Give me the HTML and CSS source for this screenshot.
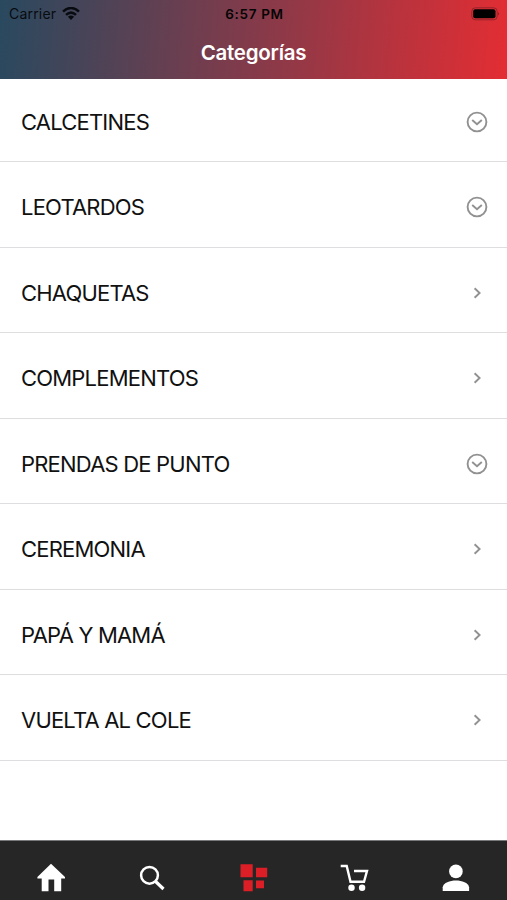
FILE: index.html
```html
<!DOCTYPE html>
<html lang="es">
<head>
<meta charset="utf-8">
<title>Categorías</title>
<link rel="stylesheet" href="styles.css">
</head>
<body>
<header class="header">
  <div class="status">
    <div class="carrier"><span>Carrier</span>
      <svg width="18" height="14" viewBox="0 0 18 14"><g fill="none" stroke="#080b10" stroke-width="2.5"><path d="M1 4.7Q9-2.7 17 4.7"/><path d="M4 7.9Q9 3.3 14 7.9"/></g><path d="M5.9 9.8Q9 7.1 12.1 9.8L9 13z" fill="#080b10"/></svg>
    </div>
    <span class="time">6:57 PM</span>
    <svg class="battery" width="30" height="14" viewBox="0 0 30 14"><rect x="1.8" y=".8" width="25.4" height="12" rx="3.5" fill="none" stroke="#942329"/><rect x="3.2" y="2.3" width="22.3" height="9" rx="2" fill="#000"/><path d="M28.3 5Q30 6.8 28.3 8.6z" fill="#64171b"/></svg>
  </div>
  <h1 class="title">Categorías</h1>
</header>
<main class="list">
  <div class="row"><span class="label">CALCETINES</span><svg class="icon" viewBox="0 0 22 22"><circle cx="11" cy="11" r="9.4"/><path d="M6.2 9L11 13.2L15.8 9"/></svg></div>
  <div class="row"><span class="label">LEOTARDOS</span><svg class="icon" viewBox="0 0 22 22"><circle cx="11" cy="11" r="9.4"/><path d="M6.2 9L11 13.2L15.8 9"/></svg></div>
  <div class="row"><span class="label">CHAQUETAS</span><svg class="icon" viewBox="0 0 22 22"><path d="M8.6 6.2L13.6 11L8.6 15.8"/></svg></div>
  <div class="row"><span class="label">COMPLEMENTOS</span><svg class="icon" viewBox="0 0 22 22"><path d="M8.6 6.2L13.6 11L8.6 15.8"/></svg></div>
  <div class="row"><span class="label">PRENDAS DE PUNTO</span><svg class="icon" viewBox="0 0 22 22"><circle cx="11" cy="11" r="9.4"/><path d="M6.2 9L11 13.2L15.8 9"/></svg></div>
  <div class="row"><span class="label">CEREMONIA</span><svg class="icon" viewBox="0 0 22 22"><path d="M8.6 6.2L13.6 11L8.6 15.8"/></svg></div>
  <div class="row"><span class="label">PAPÁ Y MAMÁ</span><svg class="icon" viewBox="0 0 22 22"><path d="M8.6 6.2L13.6 11L8.6 15.8"/></svg></div>
  <div class="row"><span class="label">VUELTA AL COLE</span><svg class="icon" viewBox="0 0 22 22"><path d="M8.6 6.2L13.6 11L8.6 15.8"/></svg></div>
</main>
<nav class="tabs">
  <svg viewBox="0 0 30 30"><path fill="#fff" d="M15.3 .8L29.3 14V15.5H25.5V28.2H18.5V16.5H12.8V28.2H6V15.5H1.7V14z"/></svg>
  <svg viewBox="0 0 30 30" fill="none" stroke="#fff"><circle cx="12.8" cy="12.3" r="8.4" stroke-width="2.5"/><path d="M18.9 18.5L26.8 26" stroke-width="3.2"/></svg>
  <svg viewBox="0 0 30 30" fill="#dc1f26"><path d="M1.8 1.3H14V14.3H1.8zM17.3 4.8H28.5V14.3H17.3zM4.8 17.3H14V28.3H4.8zM17.3 17.5H25.3V25.3H17.3z"/></svg>
  <svg viewBox="0 0 30 30"><path fill="none" stroke="#fff" stroke-width="2.4" d="M1 3H7L10.8 18.8H24.3L27.3 8H14.3"/><circle cx="11.8" cy="24.8" r="3.2" fill="#fff"/><circle cx="22.4" cy="24.8" r="3.2" fill="#fff"/></svg>
  <svg viewBox="0 0 30 30" fill="#fff"><circle cx="14.2" cy="8.4" r="6.8"/><path d="M1 28V24.2C2.7 15.4 25.7 15.4 27.4 24.2V28z"/></svg>
</nav>
</body>
</html>
```
FILE: styles.css
```css
* { box-sizing: border-box; }
body {
  margin: 0;
  height: 900px;
  display: flex;
  flex-direction: column;
  overflow: hidden;
  background: #fff;
  font-family: Inter, "Liberation Sans", sans-serif;
}
svg { display: block; flex: none; }
.header {
  height: 79px;
  background: linear-gradient(95deg, #29495f 0%, #803b4b 48%, #e32d33 100%);
}
.status {
  height: 27px;
  padding: 0 7px 0 9px;
  display: grid;
  grid-template-columns: 1fr auto 1fr;
  align-items: center;
  color: #080b10;
  font-size: 14px;
}
.carrier { display: flex; align-items: center; gap: 6px; letter-spacing: .2px; }
.time { font-size: 13.5px; font-weight: 600; letter-spacing: .65px; color: #050505; }
.battery { justify-self: end; }
.title {
  margin: 12px 0 0;
  text-align: center;
  color: #fff;
  font-size: 20.5px;
  line-height: 27px;
  font-weight: 600;
  letter-spacing: -.25px;
}
.list { flex: 1; }
.row {
  height: 85.5px;
  padding: 6px 19.5px 0 21px;
  display: flex;
  align-items: center;
  justify-content: space-between;
  border-bottom: 1px solid #dedee0;
}
.row:first-child { height: 83px; padding-top: 3px; }
.label { font-size: 22px; line-height: 28px; letter-spacing: -.8px; color: #111; }
.icon { width: 22px; height: 22px; fill: none; stroke: #919191; stroke-width: 1.9; }
.tabs {
  height: 60px;
  padding-top: 22px;
  display: flex;
  border-top: 1px solid #77797a;
  background: #262626;
}
.tabs svg { flex: 1; height: 30px; min-width: 0; }
```
